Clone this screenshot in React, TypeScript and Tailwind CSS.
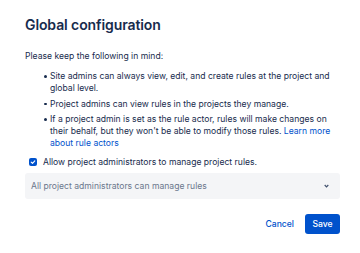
import React from "react";

export default function App() {
  return (
    <div
      className="w-[360px] h-[253px] bg-white text-[#172B4D] pl-[25px] pr-[20px] pt-[15px]"
      style={{ fontFamily: "Inter, 'Liberation Sans', sans-serif" }}
    >
      <h1 className="text-[14px] leading-[20px] font-semibold tracking-[-0.1px]">Global configuration</h1>
      <p className="mt-[15px] text-[8.6px] leading-[12px]">Please keep the following in mind:</p>
      <ul className="mt-[8px] pl-[25px] text-[8.6px] leading-[12px] flex flex-col gap-[3.5px]">
        <li className="relative">
          <span className="absolute left-[-6px] top-[5px] w-[2.5px] h-[2.5px] rounded-full bg-[#172B4D]" />
          Site admins can always view, edit, and create rules at the project and global level.
        </li>
        <li className="relative">
          <span className="absolute left-[-6px] top-[5px] w-[2.5px] h-[2.5px] rounded-full bg-[#172B4D]" />
          Project admins can view rules in the projects they manage.
        </li>
        <li className="relative">
          <span className="absolute left-[-6px] top-[5px] w-[2.5px] h-[2.5px] rounded-full bg-[#172B4D]" />
          If a project admin is set as the rule actor, rules will make changes on their behalf, but they won't be able to modify those rules.{" "}
          <span className="text-[#0052CC]">Learn more about rule actors</span>
        </li>
      </ul>
      <label className="mt-[7px] flex items-center h-[12px] text-[8.6px] leading-[12px]">
        <span className="ml-[4px] w-[8px] h-[8px] rounded-[2px] bg-[#0052CC] flex items-center justify-center">
          <svg width="6" height="6" viewBox="0 0 6 6">
            <path d="M1.2 3.1 L2.5 4.3 L4.8 1.8" stroke="white" strokeWidth="1.1" fill="none" strokeLinecap="round" strokeLinejoin="round" />
          </svg>
        </span>
        <span className="ml-[6px]">Allow project administrators to manage project rules.</span>
      </label>
      <div className="mt-[5px] h-[26px] rounded-[3px] bg-[#F4F5F7] flex items-center justify-between pl-[6px] pr-[11px] text-[8.6px] text-[#6B778C]">
        <span>All project administrators can manage rules</span>
        <svg width="5" height="4" viewBox="0 0 5 4">
          <path d="M0.7 1 L2.5 2.8 L4.3 1" stroke="#42526E" strokeWidth="1.2" fill="none" />
        </svg>
      </div>
      <div className="mt-[15px] flex justify-end items-center gap-[2px]">
        <button className="h-[20px] px-[9px] text-[8.6px] font-medium text-[#0052CC]">Cancel</button>
        <button className="h-[20px] w-[35px] rounded-[3px] bg-[#0052CC] text-white text-[8.6px] font-medium">Save</button>
      </div>
    </div>
  );
}
